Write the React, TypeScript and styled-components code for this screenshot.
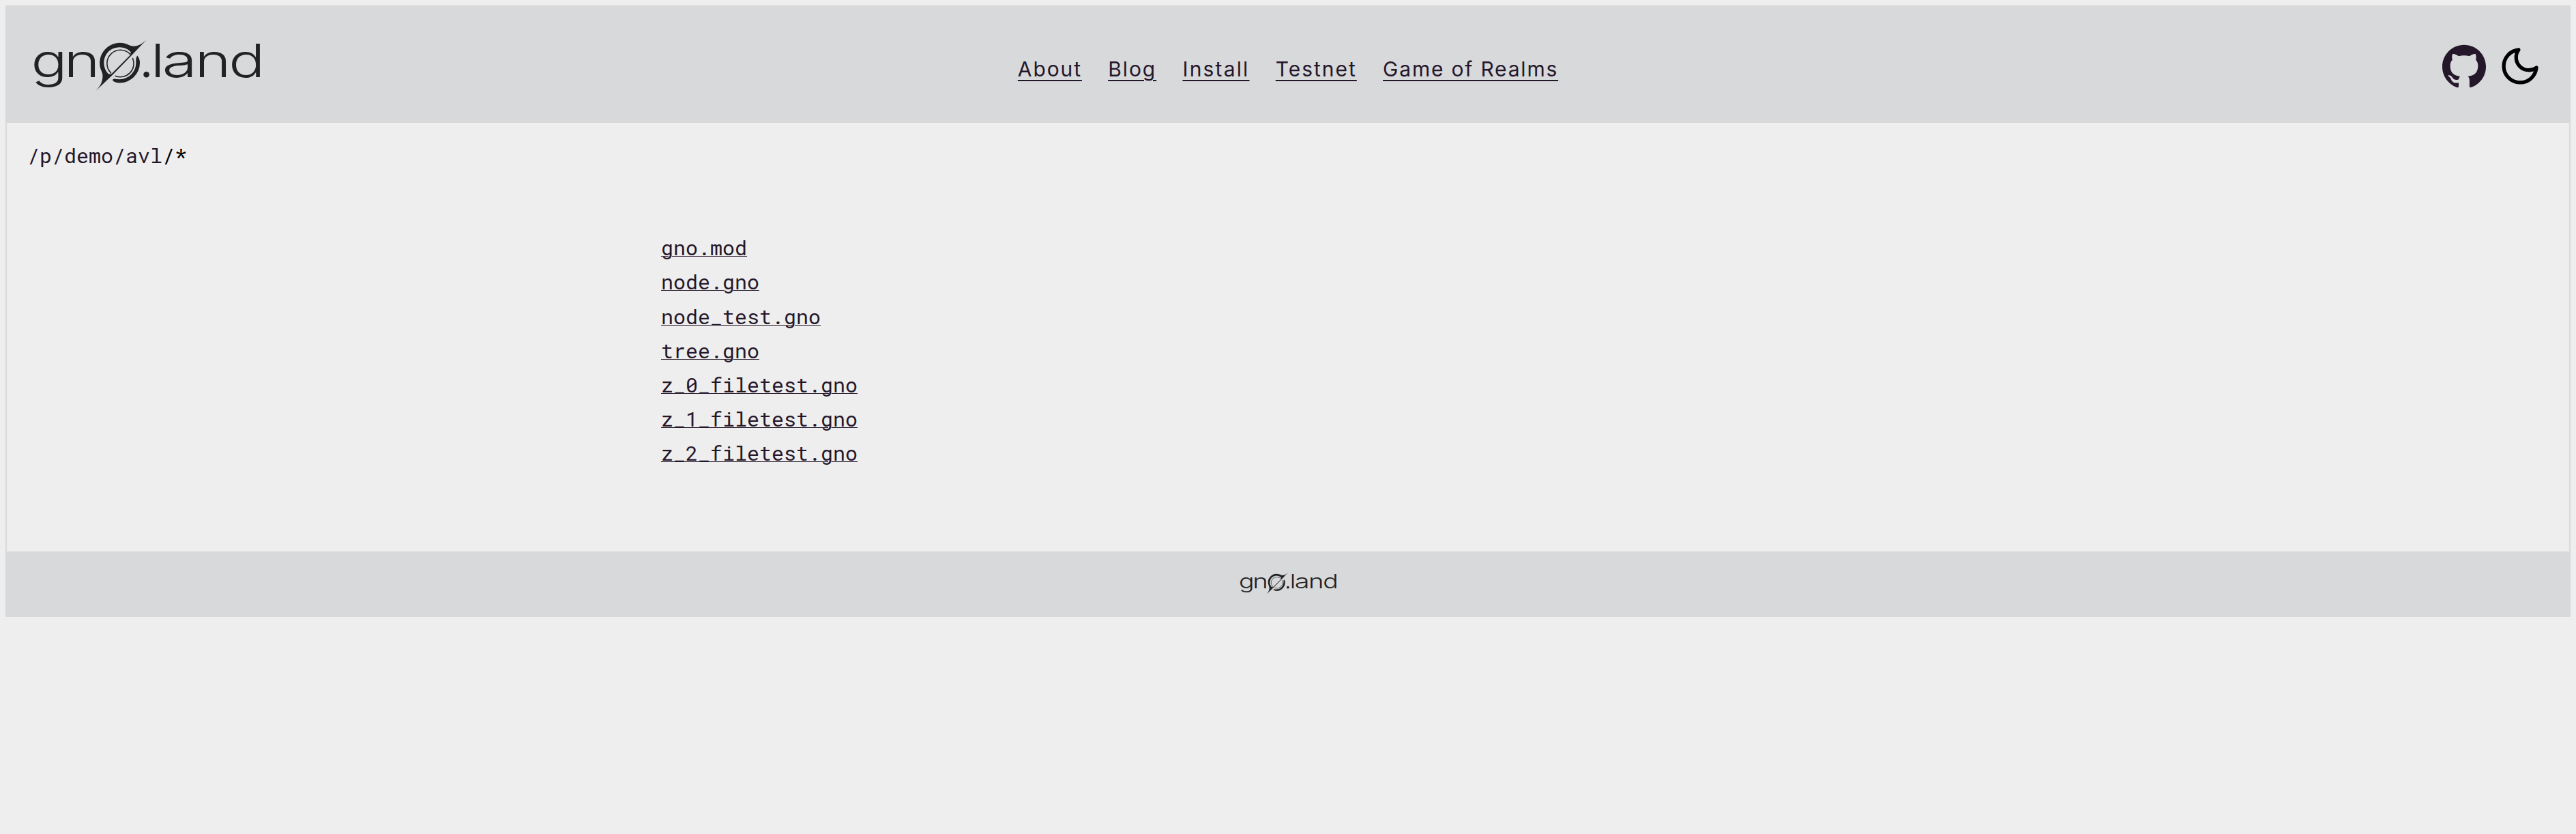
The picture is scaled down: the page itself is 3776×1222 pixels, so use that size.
import React from 'react';
import styled, { createGlobalStyle } from 'styled-components';
import { SiGithub } from 'react-icons/si';

const colors = {
  background: '#eeeeee',
  border: '#d7d9db',
  link: '#25172a',
  text: '#000000',
  logo: '#222222',
};

const GlobalStyle = createGlobalStyle`
  *, *::before, *::after { box-sizing: border-box; }
  body {
    margin: 0;
    padding: 8px;
    background: ${colors.background};
    color: ${colors.text};
    font-family: Inter, sans-serif;
    font-size: 30px;
  }
`;

const Page = styled.div`
  border: 2px solid ${colors.border};
`;

const Header = styled.header`
  display: grid;
  grid-template-columns: 1fr auto 1fr;
  align-items: center;
  height: 170px;
  padding: 0 38px;
  background: ${colors.border};
`;

const HomeLink = styled.a`
  display: flex;
  margin-top: 2px;
`;

const LogoSvg = styled.svg<{ $width: number }>`
  display: block;
  width: ${p => p.$width}px;
  height: auto;
  overflow: visible;
  fill: ${colors.logo};
  font-family: Inter, sans-serif;
  font-size: 67px;
  font-weight: 300;
`;

const Ring = styled.g`
  fill: none;
  stroke: ${colors.logo};
  stroke-width: 1.6;
  stroke-linecap: round;
`;

const Nav = styled.nav`
  display: flex;
  gap: 38.3px;
  padding-top: 12px;
`;

const NavLink = styled.a<{ $tracking: number }>`
  color: ${colors.link};
  letter-spacing: ${p => p.$tracking}px;
  line-height: 36px;
  text-decoration: underline;
  text-decoration-thickness: 2px;
  text-underline-offset: 5px;
`;

const Actions = styled.div`
  display: flex;
  justify-content: flex-end;
  align-items: center;
  gap: 18px;
  padding-top: 4px;
  margin-right: 2px;
`;

const GithubIcon = styled(SiGithub)`
  width: 64px;
  height: 64px;
  color: ${colors.link};
`;

const MoonIcon = styled.svg`
  width: 64px;
  height: 64px;
  fill: none;
  stroke: ${colors.text};
  stroke-width: 2;
  stroke-linecap: round;
  stroke-linejoin: round;
`;

const Main = styled.main`
  height: 628px;
  padding: 28px 30px;
  font-family: 'Roboto Mono', monospace;
`;

const Breadcrumb = styled.div`
  line-height: 40px;
`;

const BreadcrumbLink = styled.a`
  color: ${colors.link};
`;

const Files = styled.ul`
  margin: 90.2px 0 0;
  padding: 0 0 0 929px;
  list-style: none;
`;

const FileItem = styled.li`
  height: 50.2px;
  line-height: 50px;
`;

const FileLink = styled.a`
  color: ${colors.link};
  text-decoration: underline;
  text-decoration-thickness: 1px;
`;

const Footer = styled.footer`
  display: flex;
  justify-content: center;
  align-items: center;
  height: 94px;
  background: ${colors.border};
`;

// Origin and horizontal stretch of each letter of the wordmark.
const letters = [
  { char: 'g', x: 45.6, stretch: 1.315 },
  { char: 'n', x: 93.4, stretch: 1.347 },
  { char: 'l', x: 221, stretch: 1.3 },
  { char: 'a', x: 237.5, stretch: 1.4 },
  { char: 'n', x: 285.4, stretch: 1.347 },
  { char: 'd', x: 335.2, stretch: 1.316 },
];

function Logo({ width }: { width: number }) {
  return (
    <LogoSvg $width={width} viewBox="48 56 336 80" role="img">
      {letters.map(({ char, x, stretch }) => (
        <text key={x} transform={`translate(${x} 112.6) scale(${stretch} 1)`}>
          {char}
        </text>
      ))}
      <circle cx="214.6" cy="109.3" r="4.3" />
      <path
        fillRule="evenodd"
        d="M215.8 57.2 C209 64 201 69 192.5 67.3 C190 66.8 189 66 187 65 A29.5 29.5 0 0 0 149.3 105.5 C151.2 110 150.6 114 149.4 119 C148.2 124 145 128 140.8 132.8 L165.5 109.3 L193 81 Z M191.8 76.2 C191 78 191.6 79.6 191 80.6 L163.4 108.3 C161.5 108.8 160.3 108.4 158.8 108.2 A23.4 23.4 0 0 1 159 75.5 A23.4 23.4 0 0 1 191.8 76.2 Z"
      />
      <path d="M201.2 81.6 C203.8 84.5 205 88 205 92 A29.5 29.5 0 0 1 175.5 121.5 C171.5 121.5 168 120.4 165.4 118.3 C164.6 116.6 166 115.6 168 115.6 C170 115.8 173 116.4 175.5 116.2 A24.2 24.2 0 0 0 199.4 92 C199.3 88.5 199 84.5 201.2 81.6 Z" />
      <Ring>
        <path d="M190.5 79.1 A19.7 19.7 0 0 0 162.6 79.1 A19.7 19.7 0 0 0 162.6 106.9" />
        <path d="M194.6 85.5 A19.7 19.7 0 0 1 190.4 106.9 A19.7 19.7 0 0 1 169.4 111.4" />
      </Ring>
    </LogoSvg>
  );
}

const navItems = [
  { label: 'About', tracking: 1.88 },
  { label: 'Blog', tracking: 1.93 },
  { label: 'Install', tracking: 2.15 },
  { label: 'Testnet', tracking: 1.97 },
  { label: 'Game of Realms', tracking: 1.8 },
];

const files = [
  'gno.mod',
  'node.gno',
  'node_test.gno',
  'tree.gno',
  'z_0_filetest.gno',
  'z_1_filetest.gno',
  'z_2_filetest.gno',
];

export default function App() {
  return (
    <>
      <GlobalStyle />
      <Page>
        <Header>
          <HomeLink>
            <Logo width={336} />
          </HomeLink>
          <Nav>
            {navItems.map(({ label, tracking }) => (
              <NavLink key={label} $tracking={tracking}>
                {label}
              </NavLink>
            ))}
          </Nav>
          <Actions>
            <GithubIcon />
            <MoonIcon viewBox="0 0 24 24">
              <path d="M21 12.79A9 9 0 1 1 11.21 3 7 7 0 0 0 21 12.79z" />
            </MoonIcon>
          </Actions>
        </Header>
        <Main>
          <Breadcrumb>
            <BreadcrumbLink>/p</BreadcrumbLink>
            <BreadcrumbLink>/demo</BreadcrumbLink>
            <BreadcrumbLink>/avl</BreadcrumbLink>/*
          </Breadcrumb>
          <Files>
            {files.map(file => (
              <FileItem key={file}>
                <FileLink>{file}</FileLink>
              </FileItem>
            ))}
          </Files>
        </Main>
        <Footer>
          <Logo width={143} />
        </Footer>
      </Page>
    </>
  );
}
